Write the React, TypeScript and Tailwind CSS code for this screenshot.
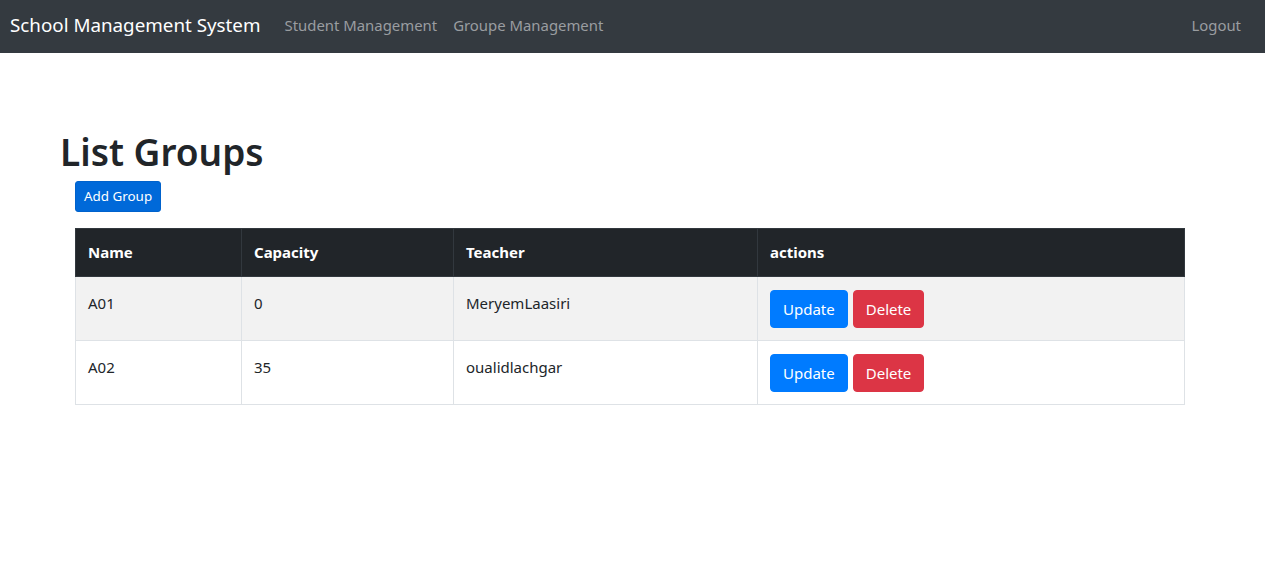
import React from "react";

const rows = [
  { name: "A01", capacity: "0", teacher: "MeryemLaasiri" },
  { name: "A02", capacity: "35", teacher: "oualidlachgar" },
];

export default function App() {
  return (
    <div className="min-h-[564px] bg-white text-[#212529] font-['Noto_Sans','Open_Sans',sans-serif]">
      <nav className="h-[53px] bg-[#343a40] flex items-center pl-[10px] pr-[24px] pb-[3px]">
        <span className="text-[18.8px] text-white mr-[24px]">School Management System</span>
        <div className="flex gap-[16px] text-[14.9px] text-[#9a9da0]">
          <span>Student Management</span>
          <span>Groupe Management</span>
        </div>
        <span className="ml-auto text-[14.9px] text-[#9a9da0]">Logout</span>
      </nav>
      <div className="px-[60px] pt-[76px]">
        <h1 className="text-[37px] font-semibold leading-[46px] mb-[6px]">List Groups</h1>
        <div className="pl-[15px] pr-[20px]">
          <button className="bg-[#0069d9] text-white text-[13.4px] leading-[21px] px-[8px] py-[4px] rounded-[3px] border border-[#0062cc]">
            Add Group
          </button>
          <table className="w-full mt-[16px] border-collapse text-[15px]">
            <thead>
              <tr className="bg-[#212529] text-white">
                <th className="text-left font-bold px-[12px] py-[12px] leading-[23px] w-[166px] border border-[#32383e]">Name</th>
                <th className="text-left font-bold px-[12px] py-[12px] leading-[23px] w-[212px] border border-[#32383e]">Capacity</th>
                <th className="text-left font-bold px-[12px] py-[12px] leading-[23px] w-[304px] border border-[#32383e]">Teacher</th>
                <th className="text-left font-bold px-[12px] py-[12px] leading-[23px] border border-[#32383e]">actions</th>
              </tr>
            </thead>
            <tbody>
              {rows.map((r, i) => (
                <tr key={r.name} className={i % 2 === 0 ? "bg-[#f2f2f2]" : "bg-white"}>
                  <td className="align-top px-[12px] pt-[14px] leading-[24px] border border-[#dee2e6]">{r.name}</td>
                  <td className="align-top px-[12px] pt-[14px] leading-[24px] border border-[#dee2e6]">{r.capacity}</td>
                  <td className="align-top px-[12px] pt-[14px] leading-[24px] border border-[#dee2e6]">{r.teacher}</td>
                  <td className="align-top px-[12px] pt-[13px] pb-[12px] border border-[#dee2e6]">
                    <div className="flex gap-[5px]">
                      <button className="bg-[#007bff] text-white px-[12px] py-[6px] leading-[24px] rounded-[4px] border border-[#007bff]">Update</button>
                      <button className="bg-[#dc3545] text-white px-[12px] py-[6px] leading-[24px] rounded-[4px] border border-[#dc3545]">Delete</button>
                    </div>
                  </td>
                </tr>
              ))}
            </tbody>
          </table>
        </div>
      </div>
    </div>
  );
}
